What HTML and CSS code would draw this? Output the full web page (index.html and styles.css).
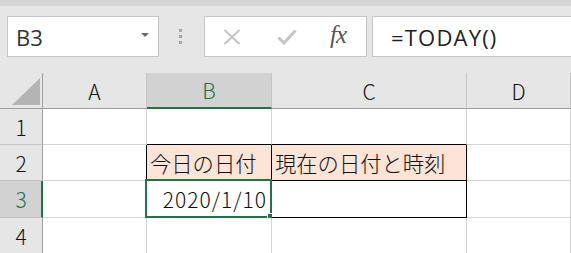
FILE: index.html
```html
<!DOCTYPE html>
<html lang="ja">
<head>
<meta charset="utf-8">
<link rel="stylesheet" href="styles.css">
</head>
<body>
<div class="app">
  <div class="topband"></div>
  <div class="fbar">
    <div class="namebox">
      <span class="name">B3</span>
      <svg class="caret" width="8" height="4" viewBox="0 0 8 4"><polygon points="0,0 8,0 4,4" fill="#6a6a6a"/></svg>
    </div>
    <div class="dots"><i></i><i></i><i></i></div>
    <div class="fnbox">
      <svg class="ic-x" width="18" height="16" viewBox="0 0 18 16"><path d="M1.5 1 L16.5 15 M16.5 1 L1.5 15" stroke="#c4c4c4" stroke-width="2" fill="none"/></svg>
      <svg class="ic-ok" width="20" height="16" viewBox="0 0 20 16"><path d="M1.5 8.5 L7 14 L18.5 1.5" stroke="#c4c4c4" stroke-width="3" fill="none"/></svg>
      <span class="fx">fx</span>
    </div>
    <div class="formula">=TODAY()</div>
  </div>
  <div class="sheet">
    <div class="corner"><svg width="28" height="27" viewBox="0 0 28 27"><polygon points="0,27 28,27 28,0" fill="#b4b4b4"/></svg></div>
    <div class="ch">A</div>
    <div class="ch sel">B</div>
    <div class="ch">C</div>
    <div class="ch">D</div>

    <div class="rh">1</div>
    <div class="c"></div>
    <div class="c bb"></div>
    <div class="c bb"></div>
    <div class="c"></div>

    <div class="rh">2</div>
    <div class="c br"></div>
    <div class="c br bb fill">今日の日付</div>
    <div class="c br bb fill">現在の日付と時刻</div>
    <div class="c"></div>

    <div class="rh sel">3</div>
    <div class="c br"></div>
    <div class="c br bb active"><span class="val">2020/1/10</span><div class="selbox"><div class="handle"></div></div></div>
    <div class="c br bb"></div>
    <div class="c"></div>

    <div class="rh">4</div>
    <div class="c"></div>
    <div class="c"></div>
    <div class="c"></div>
    <div class="c"></div>
  </div>
</div>
</body>
</html>
```

FILE: styles.css
```css
* { box-sizing: border-box; }
html, body { margin: 0; padding: 0; }
body {
  width: 571px;
  height: 253px;
  overflow: hidden;
  background: #e6e6e6;
}
.app { width: 571px; }
.topband { height: 6px; background: #d6d6d6; }
.fbar {
  display: flex;
  align-items: flex-start;
  padding: 10px 0 16px 7px;
  height: 67px;
  overflow: hidden;
}
.fbar > * { flex: none; }
.namebox {
  width: 152px;
  height: 41px;
  background: #fff;
  border: 1px solid #c6c6c6;
  display: flex;
  align-items: center;
  padding: 0 0 0 8px;
}
.name {
  font-family: "Open Sans", "Noto Sans", sans-serif;
  font-size: 22px;
  color: #333;
  flex: 1;
}
.caret { margin-right: 9px; margin-top: -3px; }
.dots {
  margin-left: 20px;
  margin-top: 13px;
  display: flex;
  flex-direction: column;
  gap: 3px;
}
.dots i { display: block; width: 3px; height: 3px; background: #a6a6a6; }
.fnbox {
  margin-left: 22px;
  width: 163px;
  height: 41px;
  background: #fff;
  border: 1px solid #c6c6c6;
  display: flex;
  align-items: center;
}
.ic-x { margin-left: 18px; }
.ic-ok { margin-left: 36px; }
.fx {
  margin-left: 33px;
  font-family: "Liberation Serif", "DejaVu Serif", serif;
  font-style: italic;
  font-size: 25px;
  color: #555;
  margin-top: -3px;
  letter-spacing: -1px;
}
.formula {
  margin-left: 5px;
  width: 230px;
  height: 41px;
  background: #fff;
  border: 1px solid #c6c6c6;
  border-right: none;
  font-family: "Open Sans", "Noto Sans", sans-serif;
  font-size: 22px;
  letter-spacing: 1.2px;
  color: #222;
  padding-left: 18px;
  display: flex;
  align-items: center;
}
.sheet {
  display: grid;
  grid-template-columns: 43px 104px 125px 195px 104px;
  grid-template-rows: 36px 36px 36px 37px 36px;
  font-family: "Noto Sans CJK JP", sans-serif;
  font-weight: 300;
  color: #111;
}
.sheet > div {
  border-right: 1px solid #d4d4d4;
  border-bottom: 1px solid #d4d4d4;
}
.corner {
  background: #e6e6e6;
  display: flex;
  align-items: flex-end;
  padding: 0 0 3px 12px;
  border-right-color: #9e9e9e !important;
  border-bottom-color: #9e9e9e !important;
}
.corner svg { display: block; }
.sheet .ch {
  background: #e6e6e6;
  border-right-color: #c4c4c4;
  border-bottom-color: #9e9e9e;
  display: flex;
  align-items: center;
  justify-content: center;
  font-size: 21px;
}
.sheet .ch.sel {
  background: #d2d2d2;
  color: #217346;
  border-bottom: 2px solid #217346;
}
.sheet .rh {
  background: #e6e6e6;
  border-right-color: #9e9e9e;
  border-bottom-color: #c4c4c4;
  display: flex;
  align-items: center;
  justify-content: center;
  font-size: 21px;
}
.sheet .rh.sel {
  background: #d2d2d2;
  color: #217346;
  border-right: 2px solid #217346;
  padding-left: 1px;
}
.c { background: #fff; position: relative; }
.sheet .br { border-right-color: #000; }
.sheet .bb { border-bottom-color: #000; }
.fill {
  background: #fce4d6;
  font-size: 21.3px;
  display: flex;
  align-items: center;
  padding-left: 3px;
  white-space: nowrap;
}
.active {
  display: flex;
  align-items: center;
  justify-content: flex-end;
  padding-right: 4px;
}
.val { font-size: 21px; letter-spacing: 1px; }
.selbox {
  position: absolute;
  left: -2px;
  top: -2px;
  right: -1px;
  bottom: -1px;
  border: 2px solid #217346;
}
.handle {
  position: absolute;
  right: -5px;
  bottom: -5px;
  width: 8px;
  height: 8px;
  background: #217346;
  border: 1px solid #fff;
}
```
